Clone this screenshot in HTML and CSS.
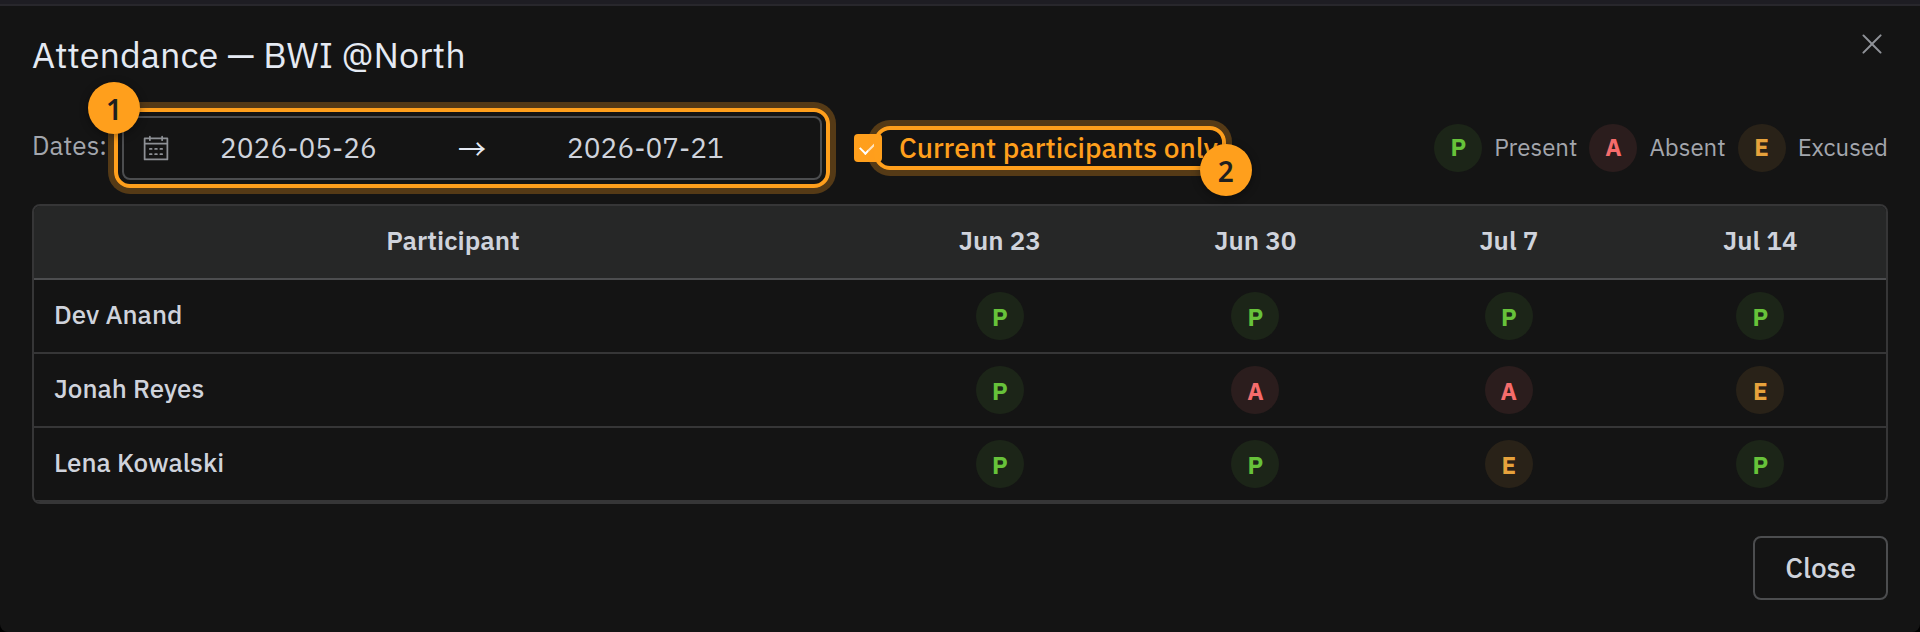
FILE: index.html
```html
<!DOCTYPE html>
<html lang="en">
<head>
  <meta charset="UTF-8">
  <meta name="viewport" content="width=device-width, initial-scale=1.0">
  <title>Attendance</title>
  <link rel="stylesheet" href="styles.css">
</head>
<body>
  <div class="dialog" role="dialog" aria-labelledby="dialog-title">
    <div class="dialog-header">
      <h1 id="dialog-title">Attendance — BWI @North</h1>
      <button class="icon-close" type="button" aria-label="Close dialog">
        <svg viewBox="0 0 1024 1024" width="32" height="32"><path fill="currentColor" d="M764.288 214.592 512 466.88 259.712 214.592a31.936 31.936 0 0 0-45.12 45.12L466.752 512 214.528 764.224a31.936 31.936 0 1 0 45.12 45.184L512 557.184l252.288 252.288a31.936 31.936 0 0 0 45.12-45.12L557.12 512.064l252.288-252.352a31.936 31.936 0 1 0-45.12-45.184z"/></svg>
      </button>
    </div>

    <div class="toolbar">
      <label class="dates-label" for="date-from">Dates:</label>
      <div class="date-range highlight">
        <svg class="calendar" viewBox="0 0 1024 1024"><path fill="currentColor" d="M128 384v512h768V192H768v32a32 32 0 1 1-64 0v-32H320v32a32 32 0 0 1-64 0v-32H128v128h768v64zm192-256h384V96a32 32 0 1 1 64 0v32h160a32 32 0 0 1 32 32v768a32 32 0 0 1-32 32H96a32 32 0 0 1-32-32V160a32 32 0 0 1 32-32h160V96a32 32 0 0 1 64 0zm-32 384h64a32 32 0 0 1 0 64h-64a32 32 0 0 1 0-64m0 192h64a32 32 0 1 1 0 64h-64a32 32 0 1 1 0-64m192-192h64a32 32 0 0 1 0 64h-64a32 32 0 0 1 0-64m0 192h64a32 32 0 1 1 0 64h-64a32 32 0 1 1 0-64m192-192h64a32 32 0 1 1 0 64h-64a32 32 0 1 1 0-64m0 192h64a32 32 0 1 1 0 64h-64a32 32 0 1 1 0-64"/></svg>
        <input id="date-from" type="text" value="2026-05-26">
        <span class="separator">→</span>
        <input type="text" value="2026-07-21" aria-label="End date">
        <span class="clear-space"></span>
        <span class="badge badge-start">1</span>
      </div>

      <div class="current-only">
        <input id="current-only" type="checkbox" checked>
        <label class="highlight" for="current-only">Current participants only<span class="badge badge-end">2</span></label>
      </div>

      <div class="legend">
        <span class="tag present">P</span><span class="legend-text">Present</span>
        <span class="tag absent">A</span><span class="legend-text">Absent</span>
        <span class="tag excused">E</span><span class="legend-text">Excused</span>
      </div>
    </div>

    <div class="table-box">
      <table>
        <colgroup>
          <col class="col-name">
          <col class="col-wide">
          <col class="col-wide">
          <col class="col-date">
          <col class="col-date">
        </colgroup>
        <thead>
          <tr>
            <th>Participant</th>
            <th>Jun 23</th>
            <th>Jun 30</th>
            <th>Jul 7</th>
            <th>Jul 14</th>
          </tr>
        </thead>
        <tbody>
          <tr>
            <td>Dev Anand</td>
            <td><span class="tag present">P</span></td>
            <td><span class="tag present">P</span></td>
            <td><span class="tag present">P</span></td>
            <td><span class="tag present">P</span></td>
          </tr>
          <tr>
            <td>Jonah Reyes</td>
            <td><span class="tag present">P</span></td>
            <td><span class="tag absent">A</span></td>
            <td><span class="tag absent">A</span></td>
            <td><span class="tag excused">E</span></td>
          </tr>
          <tr>
            <td>Lena Kowalski</td>
            <td><span class="tag present">P</span></td>
            <td><span class="tag present">P</span></td>
            <td><span class="tag excused">E</span></td>
            <td><span class="tag present">P</span></td>
          </tr>
        </tbody>
      </table>
    </div>

    <div class="dialog-footer">
      <button class="btn" type="button">Close</button>
    </div>
  </div>
</body>
</html>
```
FILE: styles.css
```css
* {
  box-sizing: border-box;
}

body {
  margin: 0;
  padding-top: 4px;
  background: linear-gradient(#1e1d23 50px, #000 50px);
  color: #cfd3dc;
  font-family: "IBM Plex Sans", Roboto, sans-serif;
  font-size: 26px;
}

button,
input {
  font-family: inherit;
  color: inherit;
}

.dialog {
  padding: 22px 32px 32px;
  background: #141414;
  border-top: 2px solid #28272c;
  border-radius: 0 0 8px 8px;
}

.dialog-header {
  display: flex;
  justify-content: space-between;
  align-items: flex-start;
}

h1 {
  margin: 0;
  color: #e5eaf3;
  font-size: 36px;
  font-weight: 400;
  line-height: 54px;
}

.icon-close {
  display: flex;
  padding: 0;
  border: none;
  background: none;
  color: #909399;
  cursor: pointer;
}

.toolbar {
  display: flex;
  align-items: center;
  gap: 32px;
  margin: 34px 0 24px;
}

.dates-label {
  padding-bottom: 6px;
  margin-right: -17px;
  color: #a3a6ad;
}

/* tour highlight */
.highlight {
  position: relative;
}

.highlight::after {
  content: "";
  position: absolute;
  inset: -8px;
  border: 4px solid #ff9f1c;
  border-radius: 16px;
  box-shadow: 0 0 0 6px rgba(255, 159, 28, 0.28);
  pointer-events: none;
}

.date-range.highlight::after {
  inset: -10px;
}

.badge {
  position: absolute;
  z-index: 1;
  width: 52px;
  height: 52px;
  border-radius: 50%;
  background: #ff9f1c;
  color: #1f1f1f;
  font-family: "Noto Sans", sans-serif;
  font-size: 28px;
  font-weight: 600;
  line-height: 54px;
  text-align: center;
  box-shadow: 0 2px 8px rgba(0, 0, 0, 0.4);
}

.badge-start {
  top: -36px;
  left: -36px;
}

.badge-end {
  right: -34px;
  bottom: -34px;
}

.date-range {
  display: flex;
  align-items: center;
  width: 700px;
  height: 64px;
  padding: 0 18px;
  border: 2px solid #4c4d4f;
  border-radius: 8px;
}

.calendar {
  width: 28px;
  height: 28px;
  color: #8d9095;
}

.date-range input {
  flex: 1;
  min-width: 0;
  padding: 0 0 2px;
  border: none;
  outline: none;
  background: none;
  font-size: 28px;
  text-align: center;
}

.separator {
  width: 90px;
  color: #e5eaf3;
  font-family: "Noto Sans CJK SC", sans-serif;
  font-size: 28px;
  line-height: 28px;
  text-align: center;
}

.clear-space {
  width: 28px;
}

.current-only {
  display: flex;
  align-items: center;
}

.current-only input {
  appearance: none;
  display: grid;
  place-items: center;
  width: 28px;
  height: 28px;
  margin: 0;
  padding-bottom: 3px;
  border-radius: 4px;
  background: #ff9f1c;
}

.current-only input:checked::after {
  content: "";
  width: 7px;
  height: 13px;
  border: solid #fff;
  border-width: 0 2px 2px 0;
  transform: rotate(45deg);
}

.current-only label {
  padding-left: 17px;
  color: #ff9f1c;
  font-size: 28px;
  font-weight: 500;
  line-height: 28px;
}

.legend {
  display: flex;
  align-items: center;
  gap: 12px;
  margin-left: auto;
  color: #a3a6ad;
  font-size: 24px;
}

.legend-text {
  padding-bottom: 2px;
}

.tag {
  display: inline-block;
  width: 48px;
  height: 48px;
  border-radius: 50%;
  font-size: 24px;
  font-weight: 700;
  line-height: 46px;
  text-align: center;
  vertical-align: middle;
}

td .tag {
  line-height: 50px;
}

.present {
  background: #1c2518;
  color: #67c23a;
}

.absent {
  background: #2b1d1d;
  color: #f56c6c;
}

.excused {
  background: #292218;
  color: #e6a23c;
}

.table-box {
  overflow: hidden;
  border: 2px solid #363637;
  border-radius: 8px;
}

table {
  width: 100%;
  border-collapse: separate;
  border-spacing: 0;
  table-layout: fixed;
}

.col-name {
  width: 45.25%;
}

.col-wide {
  width: 13.8%;
}

th,
td {
  height: 74px;
  padding: 0 20px;
  border-bottom: 2px solid #363637;
  font-weight: 500;
  line-height: 34px;
  text-align: center;
}

th {
  background: #262727;
  border-bottom-color: #4c4d4f;
  font-weight: 600;
}

th,
td:first-child {
  padding-bottom: 4px;
}

td:first-child {
  text-align: left;
}

.dialog-footer {
  display: flex;
  justify-content: flex-end;
  padding-top: 32px;
}

.btn {
  height: 64px;
  padding: 0 30px 2px;
  border: 2px solid #4c4d4f;
  border-radius: 8px;
  background: transparent;
  font-size: 28px;
  font-weight: 500;
  cursor: pointer;
}
```
